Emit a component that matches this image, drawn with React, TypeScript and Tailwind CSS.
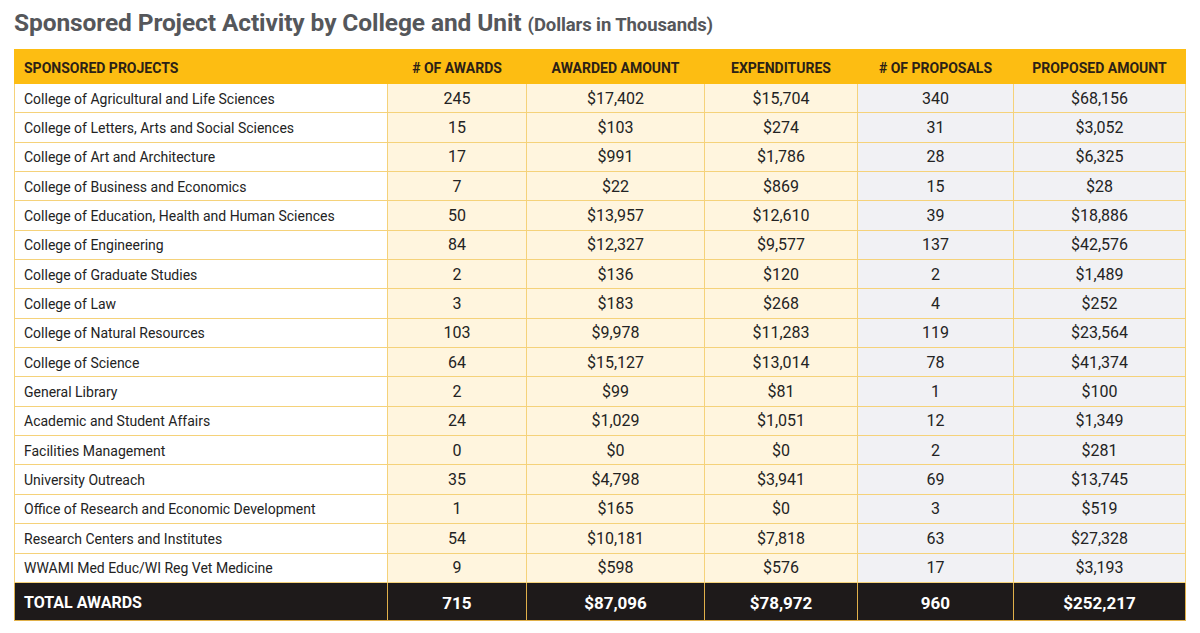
import type { FC } from "react";

type Row = [string, string, string, string, string, string];

const ROWS: Row[] = [
  ["College of Agricultural and Life Sciences", "245", "$17,402", "$15,704", "340", "$68,156"],
  ["College of Letters, Arts and Social Sciences", "15", "$103", "$274", "31", "$3,052"],
  ["College of Art and Architecture", "17", "$991", "$1,786", "28", "$6,325"],
  ["College of Business and Economics", "7", "$22", "$869", "15", "$28"],
  ["College of Education, Health and Human Sciences", "50", "$13,957", "$12,610", "39", "$18,886"],
  ["College of Engineering", "84", "$12,327", "$9,577", "137", "$42,576"],
  ["College of Graduate Studies", "2", "$136", "$120", "2", "$1,489"],
  ["College of Law", "3", "$183", "$268", "4", "$252"],
  ["College of Natural Resources", "103", "$9,978", "$11,283", "119", "$23,564"],
  ["College of Science", "64", "$15,127", "$13,014", "78", "$41,374"],
  ["General Library", "2", "$99", "$81", "1", "$100"],
  ["Academic and Student Affairs", "24", "$1,029", "$1,051", "12", "$1,349"],
  ["Facilities Management", "0", "$0", "$0", "2", "$281"],
  ["University Outreach", "35", "$4,798", "$3,941", "69", "$13,745"],
  ["Office of Research and Economic Development", "1", "$165", "$0", "3", "$519"],
  ["Research Centers and Institutes", "54", "$10,181", "$7,818", "63", "$27,328"],
  ["WWAMI Med Educ/WI Reg Vet Medicine", "9", "$598", "$576", "17", "$3,193"],
];

const HEADERS = [
  "Sponsored Projects",
  "# of Awards",
  "Awarded Amount",
  "Expenditures",
  "# of Proposals",
  "Proposed Amount",
];

const cellBg = (i: number) =>
  i === 0 ? "bg-white" : i <= 3 ? "bg-[#fff5de]" : "bg-[#f1f1f4]";

const App: FC = () => {
  return (
    <div className="w-[1200px] h-[633px] bg-white pl-[14px] pt-[8px] font-['Roboto',sans-serif]">
      <h1 className="flex items-baseline gap-[6px] h-[30px] text-[#55575b] font-bold text-[24.5px] leading-[30px] tracking-[-0.1px]">
        <span>Sponsored Project Activity by College and Unit</span>
        <span className="text-[18.5px] leading-[30px]">(Dollars in Thousands)</span>
      </h1>
      <table className="mt-[11px] w-[1171px] border-collapse table-fixed">
        <colgroup>
          <col className="w-[373px]" />
          <col className="w-[139px]" />
          <col className="w-[178px]" />
          <col className="w-[153px]" />
          <col className="w-[156px]" />
          <col className="w-[172px]" />
        </colgroup>
        <thead>
          <tr className="h-[34px] bg-[#fdbd12]">
            {HEADERS.map((h, i) => (
              <th
                key={h}
                className={`border border-[#fdbd12] uppercase text-[14px] leading-[18px] pt-[2px] font-bold text-[#2b2116] ${
                  i === 0 ? "text-left pl-[9px]" : "text-center"
                }`}
              >
                {h}
              </th>
            ))}
          </tr>
        </thead>
        <tbody>
          {ROWS.map((row) => (
            <tr key={row[0]} className="h-[29.35px]">
              {row.map((v, i) => (
                <td
                  key={i}
                  className={`border border-[#f5d27a] ${cellBg(i)} text-[#232323] leading-[20px] pt-[1px] ${
                    i === 0
                      ? "text-left pl-[9px] text-[14px]"
                      : "text-center text-[16px]"
                  }`}
                >
                  {v}
                </td>
              ))}
            </tr>
          ))}
          <tr className="h-[38px] bg-[#1e1a1a] text-white font-bold">
            {["Total Awards", "715", "$87,096", "$78,972", "960", "$252,217"].map(
              (v, i) => (
                <td
                  key={i}
                  className={`border border-[#e0b04a] leading-[20px] pt-[3px] ${
                    i === 0
                      ? "text-left pl-[9px] text-[16px] uppercase"
                      : "text-center text-[17px]"
                  }`}
                >
                  {v}
                </td>
              ),
            )}
          </tr>
        </tbody>
      </table>
    </div>
  );
};

export default App;
